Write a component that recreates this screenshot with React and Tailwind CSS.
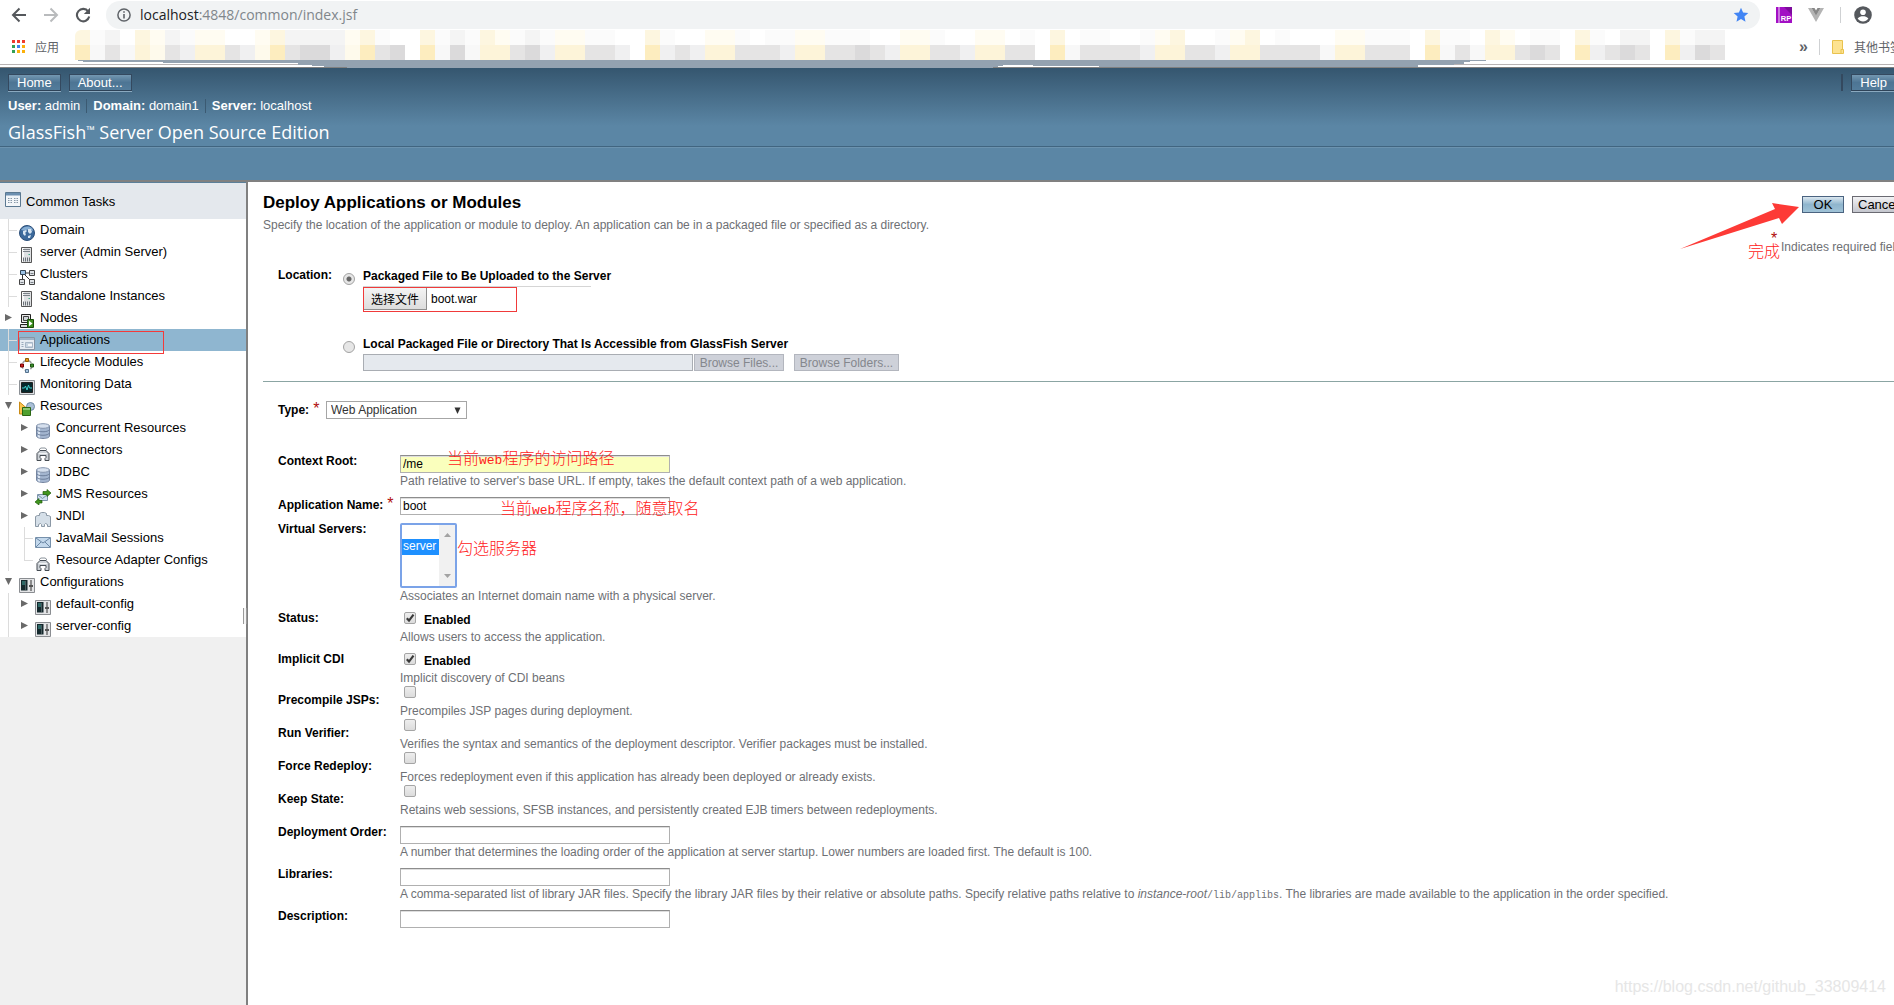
import React from "react";

const SANS = "font-['Liberation_Sans','Noto_Sans_CJK_SC',sans-serif]";
const CJK = "font-['Noto_Sans_CJK_SC',sans-serif]";

const TONES = {
  w: "bg-white",
  c: "bg-[#f8f8f8]",
  g: "bg-[#f0f0f1]",
  h: "bg-[#e5e4e4]",
  k: "bg-[#dbdadb]",
  b: "bg-[#fefaec]",
  a: "bg-[#fdf4d9]",
  y: "bg-[#fdedbf]",
};
const FAINT_TONES = {
  w: "bg-white",
  c: "bg-[#fbfbfb]",
  g: "bg-[#f4f4f4]",
  b: "bg-[#fffcf2]",
  a: "bg-[#fdf6e0]",
};
const BLUR_TOP =
  "acgwabgcbbwwbaggggbacwwacgcabcgcbbccwwacwwbbcwccbbcccwwbbcwwbbwcwawccwwcbawwcbawcwwwbbcccwaccwabwccwacwggwacgg";
const BLUR_BOTTOM =
  "ychcabhgaahgbyhkkgbyhkwyckcaahkgaahhgwyghgaahhhgaahhkhgaahhgaahhwychhhhgaahhgaahhhhcaahhhwychcaahkhwyghkhwygkh";

function Mosaic() {
  return (
    <div className="flex h-[30px] flex-col overflow-hidden rounded-tl-md">
      {[BLUR_TOP, BLUR_BOTTOM].map((row, i) => (
        <div key={i} className="flex">
          {row.split("").map((t, j) => (
            <span key={j} className={"h-[15px] w-[15px] shrink-0 " + (i === 0 ? FAINT_TONES[t] : TONES[t])} />
          ))}
        </div>
      ))}
    </div>
  );
}

function Browser() {
  return (
    <div className="bg-white">
      <div className="flex h-[30px] items-center pl-[11px]">
        <button aria-label="Back" className="h-4 w-4">
          <svg viewBox="0 0 16 16" className="h-4 w-4" fill="none" stroke="#55585c" strokeWidth="2">
            <path d="M15 8H2.5M8.5 1.5L2 8l6.500 6.500" />
          </svg>
        </button>
        <button aria-label="Forward" className="ml-4 h-4 w-4">
          <svg viewBox="0 0 16 16" className="h-4 w-4" fill="none" stroke="#b9bbbd" strokeWidth="2">
            <path d="M1 8h12.500M7.500 1.500L14 8l-6.500 6.500" />
          </svg>
        </button>
        <button aria-label="Reload" className="ml-4 h-4 w-4">
          <svg viewBox="0 0 16 16" className="h-4 w-4">
            <path d="M13.200 4.500A6.200 6.200 0 1 0 14.200 9.500" fill="none" stroke="#55585c" strokeWidth="2.100" />
            <path d="M15 .8V7H8.800z" fill="#55585c" />
          </svg>
        </button>
        <div className="ml-[15px] flex h-7 flex-1 items-center rounded-full bg-[#f1f3f4] pl-[11px] pr-[11px]">
          <svg viewBox="0 0 14 14" className="h-3.5 w-3.5">
            <circle cx="7" cy="7" r="6.100" fill="none" stroke="#5f6368" strokeWidth="1.500" />
            <path d="M6.200 3.300h1.600v1.500H6.200zM6.200 6h1.600v4.600H6.200z" fill="#5f6368" />
          </svg>
          <span className="ml-[9px] font-['Open_Sans',sans-serif] text-sm leading-5 text-[#80868b]">
            <span className="text-[#202124]">localhost</span>:4848/common/index.jsf
          </span>
          <svg viewBox="0 0 16 16" className="ml-auto h-4 w-4" fill="#4285f4">
            <path d="M8 .8l2.100 4.800 5.200.5-3.900 3.500 1.100 5.100L8 12l-4.500 2.700 1.100-5.100L.7 6.100l5.200-.5z" />
          </svg>
        </div>
        <svg viewBox="0 0 16 16" className="ml-4 h-4 w-4">
          <path d="M0 0h16v16H0z" fill="#a20fc4" />
          <path d="M8 0h8v8z" fill="#7d0b9c" />
          <path d="M2.500 0h1v16h-1z" fill="#f3d9fa" />
          <text x="4.800" y="14" fontSize="7.500" fontWeight="bold" fontFamily="Liberation Sans" fill="#fff">RP</text>
        </svg>
        <svg viewBox="0 0 16 14" className="ml-4 h-3.5 w-4">
          <path d="M0 0h3.500L8 7.500 12.500 0H16L8 14z" fill="#b4b4b4" />
          <path d="M3.500 0h3L8 2.600 9.500 0h3L8 7.700z" fill="#878787" />
        </svg>
        <span className="ml-4 h-4 w-px bg-[#cfd1d3]" />
        <svg viewBox="0 0 18 18" className="ml-[13px] mr-[22px] h-[18px] w-[18px]">
          <circle cx="9" cy="9" r="8.800" fill="#55585d" />
          <circle cx="9" cy="6.200" r="2.800" fill="#fff" />
          <path d="M3.600 12.600C5 10.600 7 10.200 9 10.200s4 .4 5.400 2.400C13 14.600 11 15.600 9 15.600s-4-1-5.400-3z" fill="#fff" />
        </svg>
      </div>
      <div className="flex h-[30px] items-center">
        <svg viewBox="0 0 13 13" className="ml-3 mt-0.5 h-[13px] w-[13px] shrink-0">
          <path d="M0 0h3v3H0zM5 0h3v3H5zM10 0h3v3h-3z" fill="#f03c2e" />
          <path d="M0 5h3v3H0zM0 10h3v3H0z" fill="#33a055" />
          <path d="M5 5h3v3H5z" fill="#3b83f0" />
          <path d="M10 5h3v3h-3zM5 10h3v3H5zM10 10h3v3h-3z" fill="#fbb00a" />
        </svg>
        <span className={"ml-2.5 mr-4 mt-1 w-6 shrink-0 whitespace-nowrap text-xs leading-5 text-[#5f6368] " + CJK}>应用</span>
        <div className="min-w-0 flex-1 overflow-hidden">
          <Mosaic />
        </div>
        <span className="mt-1 w-3 shrink-0 font-['Liberation_Sans',sans-serif] text-base font-bold leading-5 text-[#5f6368]">»</span>
        <span className="ml-2 mt-1 h-4 w-px bg-[#cfd1d3]" />
        <svg viewBox="0 0 12 14" className="ml-3 mt-1 h-3.5 w-3 shrink-0">
          <path d="M.5.5h10v13H.5z" fill="#fde391" stroke="#e9c24e" />
          <path d="M9 9.500h2.500v4H9z" fill="#fde391" stroke="#e9c24e" />
        </svg>
        <span className={"-mr-2 ml-2.5 mt-1 shrink-0 whitespace-nowrap text-xs leading-5 text-[#5f6368] " + CJK}>其他书签</span>
      </div>
      <svg className="block h-2 w-full">
        <path d="M0 4.500h1894" stroke="#b8b3b3" />
        <path d="M0 7.500h3000" stroke="#808080" />
        <path d="M78 0H1486v1h-16v1h-6v2h-10v1h-36v3H347V7h-23V6h-12V5h-14V3H163V2H83V1h-5z" fill="#94a2b0" />
        <path d="M998 7V6h5V5h30v1h66v1z" fill="#fff" />
        <path d="M993 7.500h900" stroke="#808080" />
      </svg>
    </div>
  );
}

function MastButton({ children, className = "" }) {
  return (
    <button
      className={
        "h-[17px] border border-[#34495f] border-b-[#2e4358] bg-gradient-to-b from-[#7397b1] via-[#4d7594] to-[#537c9b] px-2 text-[13px] leading-[15px] text-white shadow-[0_1px_0_#8aa9bf] " +
        className
      }
    >
      {children}
    </button>
  );
}

function Masthead() {
  return (
    <header className="border-b-2 border-[#808080] bg-[#5b86a5]">
      <div className="h-[79px] border-b border-[#416580] bg-[linear-gradient(#35566f,#5b86a5_58px)]">
        <div className="flex items-center pt-1.5">
          <MastButton className="ml-2">Home</MastButton>
          <MastButton className="ml-2">About...</MastButton>
          <span className="ml-auto h-[17px] w-0.5 bg-[#34495f]" />
          <MastButton className="-mr-0.5 ml-2">Help</MastButton>
        </div>
        <div className="mt-[7px] flex items-center pl-2 text-[13px] leading-4 text-white">
          <span><b>User:</b> admin</span>
          <span className="mx-1.5 h-3.5 w-px bg-[#3b5a72]" />
          <span><b>Domain:</b> domain1</span>
          <span className="mx-1.5 h-3.5 w-px bg-[#3b5a72]" />
          <span><b>Server:</b> localhost</span>
        </div>
        <h1 className="mt-1.5 pl-2 font-['Open_Sans',sans-serif] text-lg leading-6 text-white">
          GlassFish<span className="align-top text-[11px] leading-5">™</span> Server Open Source Edition
        </h1>
      </div>
      <div className="h-[33px] border-t border-[#6c93af]" />
    </header>
  );
}

const ICONS = {
  domain: (
    <>
      <circle cx="8" cy="8" r="7.500" fill="#3c6a9c" stroke="#2c4f7a" />
      <path d="M2 5c2-3 5-4 8-3.500 3 1 4 3 4 4.500-2-1-3-2-5-1.500S5 6 2 5z" fill="#86aed4" />
      <path d="M4 6l3-1 1 1-2 2 1 1-1 2-2-2zM9 4h3l1 3-2 2-2-2zM9 11l3-1-1 3H9z" fill="#d7e5f2" />
    </>
  ),
  server: (
    <>
      <path d="M2.500.5h10v15h-10z" fill="#dfe1e3" stroke="#555" />
      <path d="M3 1h2v14H3z" fill="#fafafa" />
      <path d="M4 2.500h7M4 4.500h7" stroke="#7b8188" />
      <path d="M4.500 10.500v4M6.500 10.500v4M8.500 10.500v4M10.500 10.500v4" stroke="#6b7178" />
      <path d="M9.500 7H11v1H9.500z" fill="#4a8" />
    </>
  ),
  clusters: (
    <>
      <path d="M5 4h5M3.500 4v6M5 5l6 6" stroke="#333" fill="none" />
      <path d="M1.500 1.500h5v4h-5z" fill="#9cc3e6" stroke="#345" />
      <path d="M10.500 1.500h5v5h-5zM.5 10.500h5v5h-5zM10.500 10.500h5v5h-5z" fill="#dfe3e7" stroke="#444" />
      <path d="M11.500 4.500h3M1.500 13.500h3M11.500 13.500h3" stroke="#7b8188" />
    </>
  ),
  nodes: (
    <>
      <path d="M2.500 1.500h9v8h-9z" fill="#e8e8e8" stroke="#222" />
      <path d="M4.500 3.500h5v4h-5z" fill="#cfd5da" stroke="#444" />
      <path d="M1.500 11.500h9v3h-9z" fill="#ddd" stroke="#222" />
      <path d="M8.500 6.500h6v8h-6z" fill="#3c8d1e" stroke="#194f08" />
      <path d="M10 7.800l3.500 2.700L10 13.200z" fill="#fff" />
    </>
  ),
  apps: (
    <>
      <path d="M.5 2.500h15v12H.5z" fill="#e6ecf2" stroke="#8593a3" />
      <path d="M1 3h14v2H1z" fill="#9fb2c6" />
      <path d="M2.500 7.500h2M2.500 9.500h2M2.500 11.500h2" stroke="#9aaabb" />
      <path d="M6.500 7.500h7v5h-7z" fill="#c7d4e0" stroke="#a6b6c6" />
      <path d="M9 9h4v2H9z" fill="#f4f7fa" />
    </>
  ),
  lifecycle: (
    <>
      <circle cx="8" cy="8.500" r="5" fill="none" stroke="#9a9a9a" strokeWidth="1.500" strokeDasharray="4 2" />
      <path d="M6.500 1.500h3v3h-3z" fill="#e59a1b" stroke="#935c05" />
      <path d="M1.500 7h3v3h-3z" fill="#c22" stroke="#700" />
      <path d="M11.500 7h3v3h-3z" fill="#3a8f2a" stroke="#1c5412" />
      <path d="M6.500 12.500h3v3h-3z" fill="#a7c5e0" stroke="#54718c" />
    </>
  ),
  monitor: (
    <>
      <path d="M.5 1.500h15v14H.5z" fill="#dcdfe2" stroke="#8b9095" />
      <path d="M2.500 3.500h11v10h-11z" fill="#05282c" stroke="#222" />
      <path d="M3 9h2.500l1-2 1.500 4 1.500-5 1 3h2.500" fill="none" stroke="#3fd0cf" />
    </>
  ),
  resources: (
    <>
      <path d="M.5 1l7 6v6h-7z" fill="#fbc450" stroke="#c98a14" />
      <circle cx="11.500" cy="5.500" r="4" fill="#a9bfd6" stroke="#6f8aa6" />
      <path d="M3.500 6.500h8v8h-8z" fill="#4fa02f" stroke="#2b6613" />
      <path d="M4 7h7v2H4z" fill="#8cc870" />
    </>
  ),
  db: (
    <>
      <path d="M1.500 3v10c0 1.500 3 2.500 6.500 2.500s6.500-1 6.500-2.500V3z" fill="#a3b5cf" stroke="#7686a0" />
      <path d="M3 5v9l2 .7V5.500z" fill="#dbe5f2" />
      <path d="M1.500 6.500c1 3 12 3 13 0M1.500 10c1 3 12 3 13 0" fill="none" stroke="#6d7f9c" />
      <ellipse cx="8" cy="3" rx="6.500" ry="2.300" fill="#d6e0ee" stroke="#8595ae" />
    </>
  ),
  connector: (
    <>
      <path d="M2 15.500v-7l3-3h6l3 3v7h-4v-2l1-1v-2H5v2l1 1v2z" fill="#ccd1d6" stroke="#444b52" />
      <path d="M4.500 5.500V4l1.500-1h4l1.500 1v1.500" fill="none" stroke="#8a929a" />
      <path d="M4 8.500h8" stroke="#f3f5f7" />
    </>
  ),
  jms: (
    <>
      <path d="M2.500 5.500h10v6h-10z" fill="#cfe0f0" stroke="#7c93aa" />
      <path d="M3 6l4.500 3.500L12 6" fill="none" stroke="#7c93aa" />
      <path d="M8 2.500h4V.5L16 4l-4 3.500V5.500H8z" fill="#41961f" stroke="#1f5c08" strokeWidth=".7" />
      <path d="M7 11.500H4V9.500L0 13l4 3v-2h3z" fill="#41961f" stroke="#1f5c08" strokeWidth=".7" />
    </>
  ),
  jndi: (
    <path
      d="M.5 15.500V5.500l2-1h2v-2l2-1h3l2 1v2h2l2 1v10h-3v-2l-2-1-1 1v2h-3v-2l-1-1-2 1v2z"
      fill="#d5dfe8"
      stroke="#8b98a5"
    />
  ),
  mail: (
    <>
      <path d="M.5 4.500h15v10H.5z" fill="#c3d8ec" stroke="#7690ab" />
      <path d="M1 5l7 5 7-5M1 14l5-5M15 14l-5-5" fill="none" stroke="#6c88a6" />
    </>
  ),
  config: (
    <>
      <path d="M.5 1.500h15v14H.5z" fill="#e3e4e6" stroke="#8a8d91" />
      <path d="M2 3h6.500v10.500H2z" fill="#14282c" />
      <path d="M3 5h3M3 7h3" stroke="#46a7a0" />
      <path d="M6.500 4v9" stroke="#4b5a5e" />
      <path d="M12 3v11" stroke="#333" />
      <path d="M10 8h4v2h-4z" fill="#555" />
    </>
  ),
};

const TREE = [
  ["Domain", "domain", 0, "leaf"],
  ["server (Admin Server)", "server", 0, "leaf"],
  ["Clusters", "clusters", 0, "leaf"],
  ["Standalone Instances", "server", 0, "leaf"],
  ["Nodes", "nodes", 0, "closed"],
  ["Applications", "apps", 0, "leaf"],
  ["Lifecycle Modules", "lifecycle", 0, "leaf"],
  ["Monitoring Data", "monitor", 0, "leaf"],
  ["Resources", "resources", 0, "open"],
  ["Concurrent Resources", "db", 1, "closed"],
  ["Connectors", "connector", 1, "closed"],
  ["JDBC", "db", 1, "closed"],
  ["JMS Resources", "jms", 1, "closed"],
  ["JNDI", "jndi", 1, "closed"],
  ["JavaMail Sessions", "mail", 1, "leaf"],
  ["Resource Adapter Configs", "connector", 1, "last"],
  ["Configurations", "config", 0, "open"],
  ["default-config", "config", 1, "closed"],
  ["server-config", "config", 1, "closed"],
];

function Branch({ kind }) {
  if (kind === "closed" || kind === "open") {
    return (
      <button aria-label={kind === "open" ? "Collapse" : "Expand"} className="flex h-[22px] w-[19px] shrink-0 items-start pl-[5px] pt-[7px]">
        <svg viewBox="0 0 7 7" className="h-[7px] w-[7px]" fill="#6a6a6a">
          <path d={kind === "open" ? "M0 0h7L3.500 7z" : "M0 0l7 3.500L0 7z"} />
        </svg>
      </button>
    );
  }
  return (
    <span className="h-[22px] w-[19px] shrink-0 pl-2">
      <span className={"block w-[9px] border-l border-[#dcdcdc] " + (kind === "last" ? "h-3" : "h-[22px]")}>
        <span className="block h-3 border-b border-[#dcdcdc]" />
      </span>
    </span>
  );
}

function Sidebar() {
  return (
    <nav className="relative w-[248px] shrink-0 border-r-2 border-[#808080] bg-[#f0f0f0] text-[13px]">
      <a href="#tasks" className="flex h-[37px] items-center border-t border-[#5b7f99] bg-[#e4e8ed] pl-[5px]">
        <svg viewBox="0 0 16 15" className="-mt-1 h-[15px] w-4">
          <path d="M.5.5h15v14H.5z" fill="#f3f6f9" stroke="#5b7891" />
          <path d="M1 1h14v2.500H1z" fill="#6c8fb0" />
          <path d="M3 6.500h4M9 6.500h4M3 8.500h4M9 8.500h4M3 10.500h4M9 10.500h4" stroke="#8798a8" strokeDasharray="1.500 1" />
        </svg>
        <span className="ml-[5px] mt-0.5">Common Tasks</span>
      </a>
      <ul className="bg-white">
        {TREE.map(([name, icon, level, kind]) => (
          <li key={name} className={"relative flex h-[22px] items-start " + (name === "Applications" ? "bg-[#8fb6d0]" : "")}>
            {level === 1 && <span className="ml-2 h-full w-2 shrink-0 border-l border-[#dcdcdc]" />}
            <Branch kind={kind} />
            <a href={"#" + icon} className="flex items-start">
              <svg viewBox="0 0 16 16" className="mt-1.5 h-4 w-4 shrink-0">{ICONS[icon]}</svg>
              <span className="ml-[5px] whitespace-nowrap leading-[22px]">{name}</span>
            </a>
            {name === "Applications" && (
              <span className="pointer-events-none absolute left-[18px] top-0.5 z-10 h-[23px] w-[146px] border border-[#f43a3a]" />
            )}
          </li>
        ))}
      </ul>
      <span className="absolute -right-px top-[426px] h-4 w-1 border-x border-[#9a9a9a] bg-[#f4f4f4]" />
    </nav>
  );
}

function Help({ children }) {
  return <p className="whitespace-nowrap leading-4 text-[#6e7074]">{children}</p>;
}

function Row({ id, label, required, height, drop, children }) {
  return (
    <div className={"flex " + height}>
      <label htmlFor={id} className={"w-[122px] shrink-0 whitespace-nowrap font-bold leading-4 " + (drop ? "pt-2" : required ? "pt-px" : "")}>
        {label}
        {required && <Star />}
      </label>
      <div className="relative pt-0.5">{children}</div>
    </div>
  );
}

function Star() {
  return <span className="ml-1 text-base font-normal leading-none text-[#b00c0c]">*</span>;
}

function Field({ id, value = "", tone = "bg-white" }) {
  return (
    <input
      id={id}
      defaultValue={value}
      className={"block h-[18px] w-[270px] border border-[#b0b0b0] border-t-[#8d8d8d] pl-0.5 leading-4 shadow-[inset_0_1px_0_#dedede] outline-none " + tone}
    />
  );
}

function Check({ id, checked, text }) {
  return (
    <div className="flex h-[17px] items-start pl-1">
      <span className="relative h-3 w-3">
        <input
          id={id}
          type="checkbox"
          defaultChecked={checked}
          className="peer block h-3 w-3 appearance-none rounded-xs border border-[#a5a5a5] bg-gradient-to-b from-[#eeeeee] to-[#dcdcdc]"
        />
        <svg viewBox="0 0 12 12" className="pointer-events-none absolute inset-0 hidden h-3 w-3 peer-checked:block">
          <path d="M2.800 6.300l2.200 2.300L9.500 2.700" fill="none" stroke="#3a3a3a" strokeWidth="2.200" />
        </svg>
      </span>
      {text && <label htmlFor={id} className="ml-2 font-bold leading-4">{text}</label>}
    </div>
  );
}

function Radio({ id, checked }) {
  return (
    <input
      id={id}
      name="location"
      type="radio"
      defaultChecked={checked}
      className="mt-1.5 h-3 w-3 shrink-0 appearance-none rounded-full border border-[#a3a3a3] bg-[#e6e6e6] checked:bg-[radial-gradient(circle,#666_0,#666_2px,#e6e6e6_3px)]"
    />
  );
}

function Note({ className, children }) {
  return (
    <span className={"pointer-events-none absolute z-10 whitespace-nowrap text-base font-light leading-5 text-[#ff2020] " + CJK + " " + className}>
      {children}
    </span>
  );
}

const web = <span className="font-['Liberation_Mono',monospace] text-[13px] font-normal">web</span>;

function BrowseButton({ className, children }) {
  return (
    <button disabled className={"h-[17px] border border-[#b3b6be] bg-[#ced1d9] leading-[14px] text-[#84878d] " + className}>
      {children}
    </button>
  );
}

function Main() {
  return (
    <main className="relative min-w-0 flex-1 overflow-hidden bg-white pl-[15px] pt-2 text-xs">
      <h2 className="text-[17px] font-bold leading-[26px]">Deploy Applications or Modules</h2>
      <p className="mt-px leading-4 text-[#6e7074]">
        Specify the location of the application or module to deploy. An application can be in a packaged file or specified as a directory.
      </p>

      <div className="absolute right-0 top-3.5 -mr-3.5 flex flex-col items-end">
        <div className="flex gap-2">
          <button className="h-[17px] w-[42px] border border-[#4a6380] bg-gradient-to-b from-[#dbe7ef] via-[#8fb5cd] to-[#9fc2d6] text-[13px] leading-[14px]">OK</button>
          <button className="h-[17px] w-14 border border-[#6a6a72] bg-gradient-to-b from-[#f2f2f4] to-[#c4c6ce] px-[5px] text-left text-[13px] leading-[14px]">Cancel</button>
        </div>
        <div className="relative mt-[26px] w-[127px] whitespace-nowrap leading-4 text-[#6e7074]">
          <span className="absolute -left-3.5 -top-2"><Star /></span>
          Indicates required field
          <Note className="-left-[33px] top-px">完成</Note>
        </div>
        <svg viewBox="0 0 120 54" className="pointer-events-none absolute -top-px right-[108px] h-[54px] w-[120px]">
          <path d="M119 12L92 8l3 6L0 54l99-31 3 6z" fill="#fd3a36" />
        </svg>
      </div>

      <form onSubmit={(e) => e.preventDefault()}>
        <fieldset className="ml-[15px] mt-[34px] flex">
          <span className="w-[65px] font-bold leading-4">Location:</span>
          <div>
            <div className="flex items-start gap-2">
              <Radio id="upload" checked />
              <div className="pt-px">
                <label htmlFor="upload" className="block font-bold leading-4">Packaged File to Be Uploaded to the Server</label>
                <div className="mt-0.5 w-[228px] border-t border-[#d5d5d5]">
                  <label className="flex h-[25px] w-[154px] items-start border border-[#f03a3a]">
                    <input type="file" className="sr-only" />
                    <span className={"h-[22px] border-b border-r border-[#8e8e8e] bg-gradient-to-b from-[#f4f4f4] to-[#dddddd] px-[7px] leading-[21px] " + CJK}>选择文件</span>
                    <span className="ml-1 leading-[22px]">boot.war</span>
                  </label>
                </div>
              </div>
            </div>
            <div className="mt-[23px] flex items-start gap-2">
              <Radio id="local" />
              <div className="pt-px">
                <label htmlFor="local" className="block font-bold leading-4">
                  Local Packaged File or Directory That Is Accessible from GlassFish Server
                </label>
                <div className="mt-0.5 flex">
                  <input disabled aria-label="Local path" className="h-[17px] w-[330px] border border-[#a9adb3] bg-[#e5e9ee]" />
                  <BrowseButton className="ml-px w-[90px]">Browse Files...</BrowseButton>
                  <BrowseButton className="ml-2.5 w-[105px]">Browse Folders...</BrowseButton>
                </div>
              </div>
            </div>
          </div>
        </fieldset>

        <hr className="mt-2.5 border-[#8ba5a3]" />

        <div className="ml-[15px] mt-[19px]">
          <div className="flex">
            <label htmlFor="type" className="w-12 shrink-0 whitespace-nowrap font-bold leading-4">
              Type:<Star />
            </label>
            <div className="relative">
              <select id="type" className="h-[18px] w-[141px] appearance-none border border-[#a6a6a6] bg-white pl-1 leading-4 text-[#333]">
                <option>Web Application</option>
              </select>
              <svg viewBox="0 0 7 7" className="pointer-events-none absolute right-1.5 top-1.5 h-[7px] w-[7px]">
                <path d="M.5.5h6L3.500 7z" fill="#333" />
              </svg>
            </div>
          </div>

          <div className="mt-[34px]">
            <Row id="ctx" label="Context Root:" height="h-[42px]">
              <Field id="ctx" value="/me" tone="bg-[#faffbd]" />
              <Help>Path relative to server's base URL. If empty, takes the default context path of a web application.</Help>
              <Note className="left-[47px] -top-1.5">当前{web}程序的访问路径</Note>
            </Row>
            <Row id="app" label="Application Name:" required height="h-[26px]">
              <Field id="app" value="boot" />
              <Note className="left-[100px] top-0.5">当前{web}程序名称，随意取名</Note>
            </Row>
            <Row id="vs" label="Virtual Servers:" height="h-[89px]">
              <div className="flex h-[65px] w-[57px] overflow-hidden rounded-xs border-2 border-[#7ba3e8]">
                <select
                  id="vs"
                  multiple
                  size="4"
                  defaultValue={["server"]}
                  className="h-full w-[37px] appearance-none overflow-hidden bg-white p-0 [scrollbar-width:none]"
                >
                  <option value="" className="h-3.5 min-h-0 p-0" />
                  <option value="server" className="h-4 min-h-0 px-px py-0 checked:bg-[linear-gradient(#1e90ff,#1e90ff)] checked:text-white">server</option>
                </select>
                <span className="flex flex-1 flex-col items-center justify-between bg-[#f1f1f1] py-2">
                  <svg viewBox="0 0 7 4" className="h-1 w-[7px]"><path d="M0 4h7L3.500 0z" fill="#a3a3a3" /></svg>
                  <svg viewBox="0 0 7 4" className="h-1 w-[7px]"><path d="M0 0h7L3.500 4z" fill="#a3a3a3" /></svg>
                </span>
              </div>
              <Help>Associates an Internet domain name with a physical server.</Help>
              <Note className="left-[57px] top-4">勾选服务器</Note>
            </Row>
            <Row id="status" label="Status:" height="h-[41px]">
              <Check id="status" checked text="Enabled" />
              <Help>Allows users to access the application.</Help>
            </Row>
            <Row id="cdi" label="Implicit CDI" height="h-[33px]">
              <Check id="cdi" checked text="Enabled" />
              <Help>Implicit discovery of CDI beans</Help>
            </Row>
            <Row id="jsp" label="Precompile JSPs:" height="h-[33px]" drop>
              <Check id="jsp" />
              <Help>Precompiles JSP pages during deployment.</Help>
            </Row>
            <Row id="verify" label="Run Verifier:" height="h-[33px]" drop>
              <Check id="verify" />
              <Help>Verifies the syntax and semantics of the deployment descriptor. Verifier packages must be installed.</Help>
            </Row>
            <Row id="force" label="Force Redeploy:" height="h-[33px]" drop>
              <Check id="force" />
              <Help>Forces redeployment even if this application has already been deployed or already exists.</Help>
            </Row>
            <Row id="keep" label="Keep State:" height="h-[41px]" drop>
              <Check id="keep" />
              <Help>Retains web sessions, SFSB instances, and persistently created EJB timers between redeployments.</Help>
            </Row>
            <Row id="order" label="Deployment Order:" height="h-[42px]">
              <Field id="order" />
              <Help>A number that determines the loading order of the application at server startup. Lower numbers are loaded first. The default is 100.</Help>
            </Row>
            <Row id="libs" label="Libraries:" height="h-[42px]">
              <Field id="libs" />
              <Help>
                A comma-separated list of library JAR files. Specify the library JAR files by their relative or absolute paths. Specify relative paths relative to{" "}
                <i>instance-root</i>
                <code className="font-['Liberation_Mono',monospace] text-[10px]">/lib/applibs</code>. The libraries are made available to the application in the order specified.
              </Help>
            </Row>
            <Row id="desc" label="Description:" height="h-[42px]">
              <Field id="desc" />
            </Row>
          </div>
        </div>
      </form>

      <span className="absolute bottom-2 right-2 text-base leading-5 text-[#e6e6e6]">https://blog.csdn.net/github_33809414</span>
    </main>
  );
}

export default function App() {
  return (
    <div className={"flex min-h-screen flex-col overflow-hidden bg-white text-black " + SANS}>
      <Browser />
      <Masthead />
      <div className="flex flex-1">
        <Sidebar />
        <Main />
      </div>
    </div>
  );
}
